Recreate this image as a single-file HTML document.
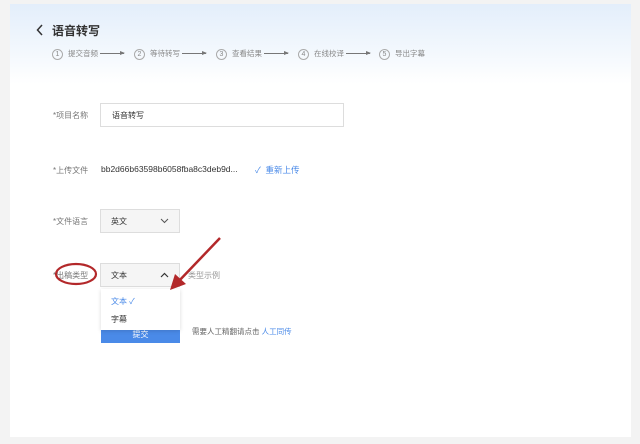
<!DOCTYPE html>
<html><head><meta charset="utf-8"><style>
body{margin:0;width:640px;height:444px;background:#f3f3f3;font-family:"Liberation Sans","Noto Sans CJK SC",sans-serif;position:relative;overflow:hidden}
.card{position:absolute;left:10px;top:4px;width:621px;height:433px;background:#fff}
.hdr{position:absolute;left:0;top:0;width:621px;height:80px;background:linear-gradient(180deg,#e3eefb 0%,#f3f8fd 60%,#fff 100%)}
.a{position:absolute;white-space:nowrap}
.lbl{font-size:8px;color:#777}
.box{position:absolute;border:1px solid #ddd;background:#fff;font-size:8px;color:#333;box-sizing:border-box}
.step{font-size:7.5px;color:#888;position:absolute;top:48px;white-space:nowrap}
.c{display:inline-block;width:9px;height:9px;border:1px solid #aaa;border-radius:50%;font-size:7px;text-align:center;line-height:9px;margin-right:5px;vertical-align:middle}
.ar{position:absolute;top:53px;width:24px;height:1px;background:#777}
.ar:after{content:"";position:absolute;right:-1px;top:-2px;border-left:5px solid #777;border-top:2px solid transparent;border-bottom:2px solid transparent}
</style></head><body>
<div class="card"><div class="hdr"></div></div>
<svg class="a" style="left:36px;top:24px" width="8" height="12"><path d="M6 1L1.5 6L6 11" stroke="#333" stroke-width="1.5" fill="none"/></svg>
<div class="a" style="left:52px;top:22px;font-size:12px;font-weight:bold;color:#333">语音转写</div>
<div class="step" style="left:52px"><span class="c">1</span>提交音频</div><div class="ar" style="left:100px"></div>
<div class="step" style="left:134px"><span class="c">2</span>等待转写</div><div class="ar" style="left:182px"></div>
<div class="step" style="left:216px"><span class="c">3</span>查看结果</div><div class="ar" style="left:264px"></div>
<div class="step" style="left:298px"><span class="c">4</span>在线校译</div><div class="ar" style="left:346px"></div>
<div class="step" style="left:379px"><span class="c">5</span>导出字幕</div>
<div class="a lbl" style="left:53px;top:110px">*项目名称</div>
<div class="box" style="left:100px;top:103px;width:244px;height:24px;padding:6px 11px">语音转写</div>
<div class="a lbl" style="left:53px;top:165px">*上传文件</div>
<div class="a" style="left:101px;top:164px;font-size:8.5px;color:#333">bb2d66b63598b6058fba8c3deb9d...</div>
<div class="a" style="left:255px;top:164px;font-size:8.5px;color:#4a8ae8">✓ &nbsp;重新上传</div>
<div class="a lbl" style="left:53px;top:216px">*文件语言</div>
<div class="box" style="left:100px;top:209px;width:80px;height:24px;background:#f5f5f5;padding:6px 10px">英文</div>
<svg class="a" style="left:160px;top:218px" width="9" height="6"><path d="M1 1L4.5 4.5L8 1" stroke="#555" stroke-width="1" fill="none"/></svg>
<div class="a lbl" style="left:53px;top:270px">*出稿类型</div>
<svg class="a" style="left:54px;top:262px" width="44" height="24"><ellipse cx="22" cy="12" rx="20" ry="10" stroke="#b3282a" stroke-width="2.2" fill="none"/></svg>
<div class="a" style="left:101px;top:326px;width:79px;height:17px;background:#4a8ae8;color:#fff;font-size:8px;text-align:center;line-height:17px">提交</div>
<div class="box" style="left:100px;top:263px;width:80px;height:24px;background:#f5f5f5;padding:6px 10px">文本</div>
<svg class="a" style="left:160px;top:272px" width="9" height="6"><path d="M1 5L4.5 1.5L8 5" stroke="#333" stroke-width="1.2" fill="none"/></svg>
<div class="a" style="left:188px;top:270px;font-size:8px;color:#999">类型示例</div>
<div class="a" style="left:101px;top:289px;width:79px;height:41px;background:#fff;box-shadow:0 1px 4px rgba(0,0,0,.15)"></div>
<div class="a" style="left:111px;top:296px;font-size:8px;color:#4a8ae8">文本 ✓</div>
<div class="a" style="left:111px;top:314px;font-size:8px;color:#333">字幕</div>
<div class="a" style="left:192px;top:326px;font-size:7.5px;color:#666">需要人工精翻请点击 <span style="color:#4a8ae8">人工同传</span></div>
<svg class="a" style="left:165px;top:235px" width="60" height="60"><path d="M55 3L12 48" stroke="#b3282a" stroke-width="2.5"/><path d="M5 55L10 39L21 49Z" fill="#b3282a"/></svg>
</body></html>
